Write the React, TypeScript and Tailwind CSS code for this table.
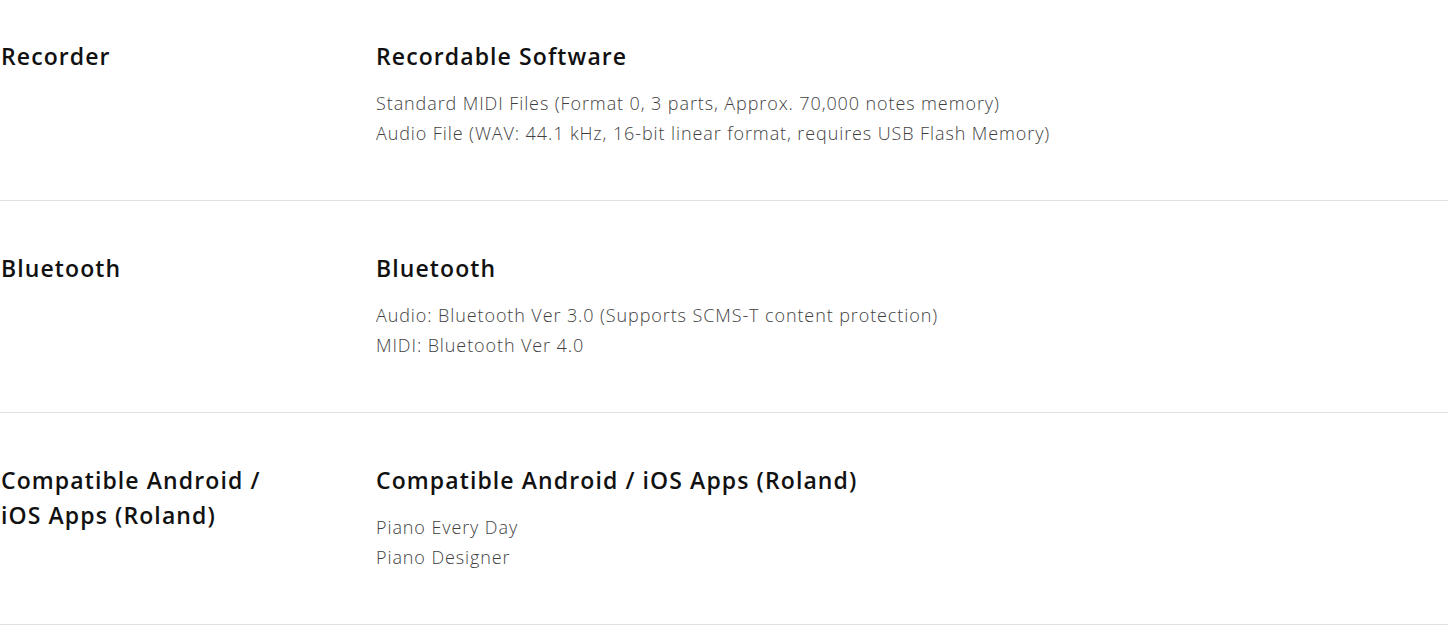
const specs = [
  {
    label: 'Recorder',
    title: 'Recordable Software',
    lines: [
      'Standard MIDI Files (Format 0, 3 parts, Approx. 70,000 notes memory)',
      'Audio File (WAV: 44.1 kHz, 16-bit linear format, requires USB Flash Memory)',
    ],
  },
  {
    label: 'Bluetooth',
    title: 'Bluetooth',
    lines: ['Audio: Bluetooth Ver 3.0 (Supports SCMS-T content protection)', 'MIDI: Bluetooth Ver 4.0'],
  },
  {
    label: 'Compatible Android / iOS Apps (Roland)',
    title: 'Compatible Android / iOS Apps (Roland)',
    lines: ['Piano Every Day', 'Piano Designer'],
  },
];

export default function App() {
  return (
    <div className="min-h-screen bg-white font-['Open_Sans','Liberation_Sans',sans-serif] antialiased">
      <div className="-mt-[11px]">
        {specs.map((s) => (
          <div key={s.label} className="grid grid-cols-[376px_1fr] border-b border-[#e1e1e1] pt-[50px] pb-[52px]">
            <div className="w-[290px] pl-[1px] text-[23px] leading-[35px] font-semibold tracking-[1.1px] text-[#111]">
              {s.label}
            </div>
            <div>
              <h3 className="text-[23px] leading-[35px] font-semibold tracking-[1.1px] text-[#111]">{s.title}</h3>
              <ul className="mt-[14px] text-[18px] leading-[30px] font-light tracking-[0.9px] text-[#3f3f3f]">
                {s.lines.map((l) => (
                  <li key={l}>{l}</li>
                ))}
              </ul>
            </div>
          </div>
        ))}
      </div>
    </div>
  );
}
